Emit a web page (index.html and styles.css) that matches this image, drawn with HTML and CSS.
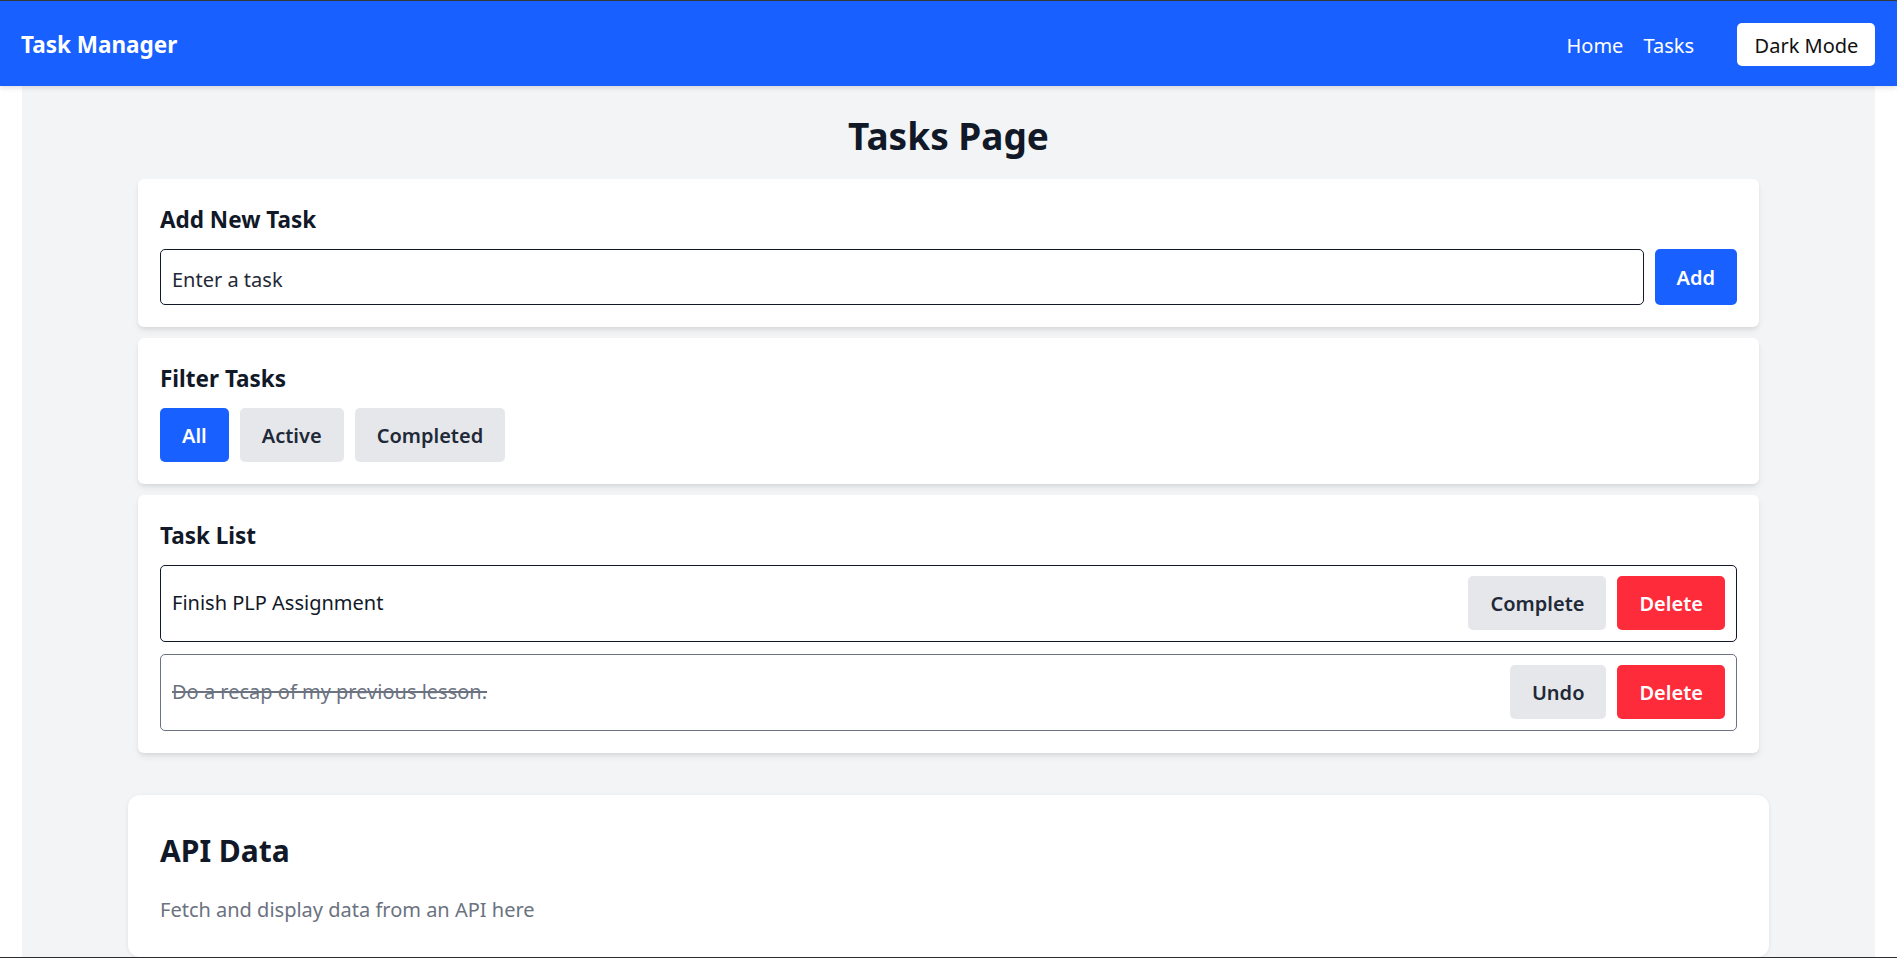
FILE: index.html
```html
<!DOCTYPE html>
<html lang="en">
<head>
<meta charset="utf-8">
<title>Task Manager</title>
<link rel="stylesheet" href="styles.css">
</head>
<body>
<nav class="navbar">
  <div class="brand">Task Manager</div>
  <div class="nav-right">
    <div class="nav-links">
      <a class="nav-link" href="#">Home</a>
      <a class="nav-link" href="#">Tasks</a>
    </div>
    <button class="theme-btn">Dark Mode</button>
  </div>
</nav>
<main class="main">
  <h1 class="page-title">Tasks Page</h1>
  <div class="stack">
    <section class="card">
      <h3 class="card-title">Add New Task</h3>
      <div class="add-row">
        <input class="task-input" type="text" placeholder="Enter a task">
        <button class="btn btn-blue btn-add">Add</button>
      </div>
    </section>
    <section class="card">
      <h3 class="card-title">Filter Tasks</h3>
      <div class="btn-row">
        <button class="btn btn-blue">All</button>
        <button class="btn btn-gray">Active</button>
        <button class="btn btn-gray">Completed</button>
      </div>
    </section>
    <section class="card">
      <h3 class="card-title">Task List</h3>
      <ul class="task-list">
        <li class="task">
          <span class="task-text">Finish PLP Assignment</span>
          <div class="btn-row">
            <button class="btn btn-gray">Complete</button>
            <button class="btn btn-red">Delete</button>
          </div>
        </li>
        <li class="task task-done">
          <span class="task-text">Do a recap of my previous lesson.</span>
          <div class="btn-row">
            <button class="btn btn-gray">Undo</button>
            <button class="btn btn-red">Delete</button>
          </div>
        </li>
      </ul>
    </section>
  </div>
  <section class="api-card">
    <h2 class="api-title">API Data</h2>
    <p class="api-text">Fetch and display data from an API here</p>
  </section>
</main>
</body>
</html>
```
FILE: styles.css
```css
* { box-sizing: border-box; }
html, body { height: 100%; }
body {
  margin: 0;
  background: #ffffff;
  font-family: "Noto Sans", "Open Sans", sans-serif;
  font-size: 20px;
  color: #111827;
  border-top: 1px solid #34373c;
  overflow: hidden;
}
body::after {
  content: "";
  position: fixed;
  left: 0;
  right: 0;
  bottom: 0;
  height: 1px;
  background: #2a2c30;
}
.navbar {
  height: 85px;
  background: #1860ff;
  display: flex;
  align-items: center;
  justify-content: space-between;
  padding: 2px 22px 0 21px;
  box-shadow: 0 2px 5px rgba(0, 0, 0, 0.12);
  position: relative;
  z-index: 2;
}
.brand {
  color: #fff;
  font-weight: 700;
  font-size: 22.5px;
  line-height: 30px;
}
.nav-right {
  display: flex;
  align-items: center;
}
.nav-links {
  display: flex;
  gap: 20px;
  margin-right: 43px;
}
.nav-link {
  color: #fff;
  text-decoration: none;
  font-size: 20px;
  line-height: 30px;
  padding-top: 2px;
}
.theme-btn {
  font-family: inherit;
  font-size: 20px;
  line-height: 31px;
  padding: 7px 16px 5px 17px;
  border: none;
  border-radius: 5px;
  background: #fff;
  color: #111111;
  width: 138px;
}
.main {
  margin: 0 22px;
  background: #f3f4f6;
  min-height: calc(100% - 85px);
  padding: 25px 0 0;
}
.page-title {
  margin: 0 0 18px;
  text-align: center;
  font-size: 37px;
  line-height: 50px;
  font-weight: 700;
  color: #111827;
}
.stack {
  width: 1621px;
  margin: 0 auto;
  display: flex;
  flex-direction: column;
  gap: 11px;
}
.card {
  background: #fff;
  border-radius: 6px;
  padding: 22px;
  box-shadow: 0 4px 7px -1px rgba(0, 0, 0, 0.09), 0 2px 4px -1px rgba(0, 0, 0, 0.06);
}
.card-title {
  margin: 0 0 10px;
  font-size: 22.5px;
  line-height: 38px;
  font-weight: 700;
  color: #111827;
}
.add-row {
  display: flex;
  gap: 11px;
}
.task-input {
  flex: 1;
  height: 56px;
  border: 1px solid #111827;
  border-radius: 5px;
  padding: 4px 11px 0;
  font-family: inherit;
  font-size: 20px;
  color: #111827;
  background: #fff;
  outline: none;
}
.task-input::placeholder {
  color: #1f2937;
  opacity: 1;
}
.btn {
  font-family: inherit;
  font-size: 20px;
  font-weight: 600;
  line-height: 30px;
  height: 54px;
  padding: 2px 22px 0;
  border: none;
  border-radius: 5px;
  cursor: pointer;
}
.btn-add { height: 56px; }
.btn-blue { background: #1860ff; color: #fff; }
.btn-gray { background: #e5e7eb; color: #1f2937; }
.btn-red { background: #fe2b3b; color: #fff; }
.btn-row {
  display: flex;
  gap: 11px;
}
.task-list {
  list-style: none;
  margin: 0;
  padding: 0;
  display: flex;
  flex-direction: column;
  gap: 12px;
}
.task {
  display: flex;
  align-items: center;
  justify-content: space-between;
  border: 1px solid #111827;
  border-radius: 5px;
  padding: 10px 11px 11px;
}
.task-text {
  font-size: 20px;
  line-height: 30px;
  color: #111827;
}
.task-done {
  border-color: #6b7280;
}
.task-done .task-text {
  color: #6b7280;
  text-decoration: line-through;
}
.api-card {
  width: 1641px;
  margin: 42px auto 0;
  background: #fff;
  border-radius: 12px;
  padding: 32px;
  box-shadow: 0 1px 4px rgba(0, 0, 0, 0.08);
}
.api-title {
  margin: 4px 0 24px;
  font-size: 30px;
  line-height: 40px;
  font-weight: 700;
  color: #111827;
}
.api-text {
  margin: 0;
  font-size: 20px;
  line-height: 30px;
  color: #6b7280;
}
```
